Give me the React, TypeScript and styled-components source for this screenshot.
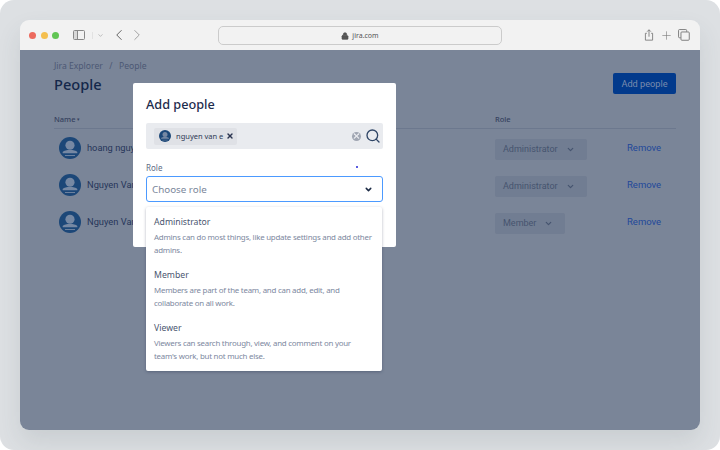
import styled, { createGlobalStyle } from "styled-components";
import { ChevronDown, ChevronLeft, ChevronRight, Lock, Plus, Search, X } from "lucide-react";

const GlobalStyle = createGlobalStyle`
  html, body { margin: 0; padding: 0; background: #ffffff; }
  body { font-family: "Noto Sans", sans-serif; }
  p, h1, h2 { margin: 0; }
`;

const people = [
  { name: "hoang nguyen", role: "Administrator" },
  { name: "Nguyen Van A", role: "Administrator" },
  { name: "Nguyen Van B", role: "Member" },
];

const roles = [
  { title: "Administrator", text: "Admins can do most things, like update settings and add other admins." },
  { title: "Member", text: "Members are part of the team, and can add, edit, and collaborate on all work." },
  { title: "Viewer", text: "Viewers can search through, view, and comment on your team's work, but not much else." },
];

function Avatar({ size }: { size: number }) {
  return (
    <svg width={size} height={size} viewBox="0 0 24 24" style={{ flex: "none", display: "block" }}>
      <circle cx="12" cy="12" r="12" fill="#1c4778" />
      <circle cx="12" cy="9" r="5" fill="#7688a3" />
      <path d="M4 16.400c1.600-1.500 4.300-2.200 8-2.200s6.400.7 8 2.200v1.200H4z" fill="#7688a3" />
      <path d="M6.500 20.200h11" stroke="#7688a3" strokeWidth="1" />
    </svg>
  );
}

export default function App() {
  return (
    <>
      <GlobalStyle />
      <Frame>
        <BrowserWindow>
          <Toolbar>
            <Lights>
              <Light color="#ec6a5e" />
              <Light color="#f4bf4f" />
              <Light color="#61c554" />
            </Lights>
            <SidebarIcon>
              <span />
            </SidebarIcon>
            <TinyChevron>
              <ChevronDown size={7} strokeWidth={2} color="#9a9a9a" />
            </TinyChevron>
            <NavIcons>
              <ChevronLeft size={18} strokeWidth={1.2} color="#555" />
              <ChevronRight size={18} strokeWidth={1.2} color="#999" />
            </NavIcons>
            <AddressBar>
              <Lock size={8} color="#555" fill="#555" />
              <span>jira.com</span>
            </AddressBar>
            <ToolIcons>
              <svg width="12" height="12" viewBox="0 0 12 14" fill="none" stroke="#777" strokeWidth="1">
                <path d="M3.500 5H1.800v8h8.400V5H8.500M6 9V1M3.800 3.100 6 .9l2.200 2.200" />
              </svg>
              <Plus size={13} strokeWidth={1.1} color="#777" />
              <svg width="12" height="12" viewBox="0 0 13 13" fill="none" stroke="#777" strokeWidth="1">
                <path d="M3 9.500H1.600a1 1 0 0 1-1-1V1.600a1 1 0 0 1 1-1h6.800a1 1 0 0 1 1 1V3" />
                <rect x="3.200" y="3.200" width="9" height="9" rx="1" />
              </svg>
            </ToolIcons>
          </Toolbar>
          <Content>
            <Breadcrumb>
              Jira Explorer<Slash>/</Slash>People
            </Breadcrumb>
            <TitleRow>
              <PageTitle>People</PageTitle>
              <AddButton>Add people</AddButton>
            </TitleRow>
            <TableHead>
              <NameHead>
                Name<SortMark>▾</SortMark>
              </NameHead>
              <RoleHead>Role</RoleHead>
            </TableHead>
            {people.map((p) => (
              <Row key={p.name + p.role}>
                <NameCell>
                  <Avatar size={22} />
                  <PersonName>{p.name}</PersonName>
                </NameCell>
                <RoleCell>
                  <RolePill>
                    {p.role}
                    <ChevronDown size={9} strokeWidth={3.2} color="#46546f" />
                  </RolePill>
                </RoleCell>
                <RemoveLink>Remove</RemoveLink>
              </Row>
            ))}

            <Modal>
              <ModalTitle>Add people</ModalTitle>
              <SearchBox>
                <Tag>
                  <Avatar size={12} />
                  <TagName>nguyen van e</TagName>
                  <X size={8} strokeWidth={4} color="#2b3550" />
                </Tag>
                <SearchIcons>
                  <ClearDot>
                    <X size={10} strokeWidth={3} color="#e9ebef" />
                  </ClearDot>
                  <Search size={16} strokeWidth={2} color="#2f4566" />
                </SearchIcons>
              </SearchBox>
              <FieldLabel>Role</FieldLabel>
              <Marker />
              <SelectBox>
                <span>Choose role</span>
                <ChevronDown size={9} strokeWidth={4} color="#1c2b45" />
              </SelectBox>
            </Modal>

            <Dropdown>
              {roles.map((r) => (
                <Option key={r.title}>
                  <OptionTitle>{r.title}</OptionTitle>
                  <OptionText>{r.text}</OptionText>
                </Option>
              ))}
            </Dropdown>
          </Content>
        </BrowserWindow>
      </Frame>
    </>
  );
}

const Frame = styled.div`
  width: 720px;
  height: 450px;
  box-sizing: border-box;
  padding: 20px;
  background: #dde0e3;
  border-radius: 14px;
  overflow: hidden;
`;
const BrowserWindow = styled.div`
  width: 680px;
  height: 410px;
  border-radius: 9px;
  overflow: hidden;
  display: flex;
  flex-direction: column;
  box-shadow: 0 12px 24px rgba(60, 70, 80, 0.12);
`;
const Toolbar = styled.div`
  position: relative;
  height: 30px;
  flex: none;
  background: #f2f2f2;
  display: flex;
  align-items: center;
  padding: 0 10px 0 9px;
`;
const Lights = styled.div`
  display: flex;
  gap: 4.500px;
`;
const Light = styled.span<{ color: string }>`
  width: 7px;
  height: 7px;
  border-radius: 50%;
  background: ${(p) => p.color};
`;
const SidebarIcon = styled.div`
  width: 10px;
  height: 8px;
  margin-left: 14px;
  border: 1px solid #888;
  border-radius: 1.500px;
  span {
    display: block;
    width: 3px;
    height: 8px;
    border-right: 1px solid #888;
    background: #d8d8d8;
  }
`;
const TinyChevron = styled.div`
  display: flex;
  margin-left: 7px;
  padding-left: 4px;
  border-left: 1px solid #e2e2e2;
`;
const NavIcons = styled.div`
  display: flex;
  margin-left: 6px;
`;
const AddressBar = styled.div`
  position: absolute;
  left: 198px;
  top: 6px;
  width: 284px;
  height: 19px;
  box-sizing: border-box;
  border: 1px solid #cbcbcb;
  border-radius: 5px;
  display: flex;
  align-items: center;
  justify-content: center;
  gap: 3px;
  font: 7px "Noto Sans", sans-serif;
  color: #555;
`;
const ToolIcons = styled.div`
  margin-left: auto;
  display: flex;
  align-items: center;
  gap: 5px;
`;
const Content = styled.div`
  position: relative;
  flex: 1;
  background: #7a8598;
  padding: 9px 24px 0 34px;
`;
const Breadcrumb = styled.div`
  font-size: 8.600px;
  line-height: 14px;
  color: #4c5874;
`;
const Slash = styled.span`
  margin: 0 6.500px;
`;
const TitleRow = styled.div`
  display: flex;
  align-items: center;
  justify-content: space-between;
  height: 21px;
`;
const PageTitle = styled.h1`
  font-size: 14.600px;
  font-weight: 500;
  line-height: 21px;
  padding-top: 2px;
  color: #14274a;
`;
const AddButton = styled.button`
  width: 63px;
  height: 21px;
  padding: 0;
  border: 0;
  border-radius: 2px;
  background: #023a8c;
  color: #7a8cac;
  font: 9.200px Roboto, sans-serif;
`;
const TableHead = styled.div`
  display: flex;
  margin-top: 19px;
  height: 15px;
  border-bottom: 1px solid #6c788e;
  font-size: 7.500px;
  font-weight: 500;
  line-height: 12px;
  color: #35415e;
`;
const NameHead = styled.div`
  width: 441px;
`;
const SortMark = styled.span`
  margin-left: 1px;
  font-size: 5px;
  vertical-align: 1px;
`;
const RoleHead = styled.div``;
const Row = styled.div`
  display: flex;
  align-items: center;
  height: 37px;
`;
const NameCell = styled.div`
  width: 441px;
  padding-left: 5px;
  box-sizing: border-box;
  display: flex;
  align-items: center;
  gap: 6px;
`;
const PersonName = styled.span`
  font: 9.300px Roboto, sans-serif;
  color: #27365a;
`;
const RoleCell = styled.div`
  width: 132px;
`;
const RolePill = styled.div`
  display: inline-flex;
  align-items: center;
  gap: 8px;
  height: 21px;
  padding: 0 12px 0 8px;
  border-radius: 2px;
  background: #717d92;
  font: 9px Roboto, sans-serif;
  color: #46546f;
`;
const RemoveLink = styled.a`
  font: 9.500px Roboto, sans-serif;
  color: #22489a;
`;
const Modal = styled.div`
  position: absolute;
  left: 113px;
  top: 33px;
  width: 263px;
  height: 164px;
  box-sizing: border-box;
  padding: 12px 13px 0;
  border-radius: 2px;
  background: #fff;
`;
const ModalTitle = styled.h2`
  font-size: 12.700px;
  font-weight: 500;
  line-height: 19px;
  color: #1d2c4d;
`;
const SearchBox = styled.div`
  display: flex;
  align-items: center;
  justify-content: space-between;
  height: 26px;
  margin-top: 9px;
  padding: 0 0 0 8px;
  border-radius: 2px;
  background: #e9ebef;
`;
const Tag = styled.div`
  display: flex;
  align-items: center;
  gap: 3px;
  height: 17px;
  padding: 0 3px 0 5px;
  border-radius: 2px;
  background: #dfe1e6;
`;
const TagName = styled.span`
  font-size: 7.500px;
  color: #2e3a55;
  margin: 0 0 0 2px;
`;
const SearchIcons = styled.div`
  display: flex;
  align-items: center;
  gap: 4px;
  padding-right: 2px;
`;
const ClearDot = styled.span`
  width: 9px;
  height: 9px;
  border-radius: 50%;
  background: #a0a6b2;
  display: flex;
  align-items: center;
  justify-content: center;
`;
const FieldLabel = styled.div`
  margin-top: 13px;
  font-size: 8px;
  line-height: 12px;
  color: #5e6c84;
`;
const Marker = styled.span`
  position: absolute;
  left: 223px;
  top: 83px;
  width: 1.500px;
  height: 1.500px;
  background: #5a5ce0;
`;
const SelectBox = styled.div`
  display: flex;
  align-items: center;
  justify-content: space-between;
  height: 26px;
  box-sizing: border-box;
  margin-top: 2px;
  padding: 0 9px 0 5px;
  border: 1.500px solid #4c9aff;
  border-radius: 3px;
  background: #fff;
  font-size: 9.800px;
  color: #7a869a;
`;
const Dropdown = styled.div`
  position: absolute;
  left: 126px;
  top: 157px;
  width: 236px;
  height: 164px;
  box-sizing: border-box;
  padding-top: 9px;
  border-radius: 2px;
  background: #fff;
  box-shadow: 0 1px 3px rgba(30, 40, 70, 0.35);
`;
const Option = styled.div`
  height: 53px;
  box-sizing: border-box;
  padding: 0 8px;
`;
const OptionTitle = styled.div`
  font-size: 8.700px;
  line-height: 13px;
  color: #4a5670;
`;
const OptionText = styled.p`
  margin-top: 2px;
  font-size: 7.900px;
  letter-spacing: -0.24px;
  line-height: 13px;
  color: #7d88a0;
`;
